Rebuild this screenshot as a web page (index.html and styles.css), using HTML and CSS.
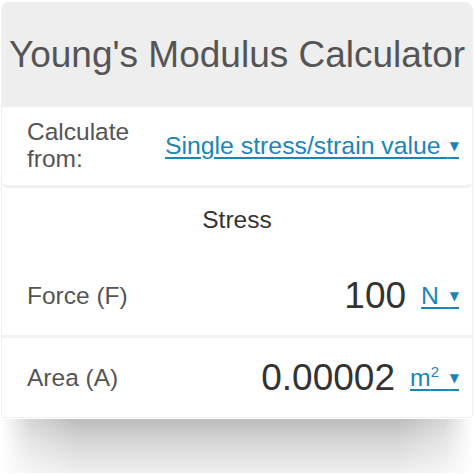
FILE: index.html
```html
<!DOCTYPE html>
<html>
<head>
<meta charset="utf-8">
<link rel="stylesheet" href="styles.css">
</head>
<body>
<div class="card">
  <div class="header">Young's Modulus Calculator</div>
  <div class="row calc">
    <div class="label two-line">Calculate<br>from:</div>
    <a class="select">Single stress/strain value <span class="gap"> </span><span class="arrow">&#9660;</span></a>
  </div>
  <div class="section">
    <div class="section-title">Stress</div>
    <div class="row field sep">
      <div class="label">Force (F)</div>
      <div class="value-group">
        <span class="value">100</span>
        <a class="select">N <span class="gap wide"> </span><span class="arrow">&#9660;</span></a>
      </div>
    </div>
    <div class="row field">
      <div class="label">Area (A)</div>
      <div class="value-group">
        <span class="value">0.00002</span>
        <a class="select">m<sup>2</sup> <span class="gap wide"> </span><span class="arrow">&#9660;</span></a>
      </div>
    </div>
  </div>
</div>
<div class="shadow"></div>
</body>
</html>
```
FILE: styles.css
```css
html, body {
  margin: 0;
  padding: 0;
  background: #ffffff;
}
body {
  font-family: "Liberation Sans", Arial, sans-serif;
  width: 474px;
  height: 474px;
  overflow: hidden;
}
.card {
  margin: 2px 1px 0 1px;
  border: 1px solid #efefef;
  border-top: none;
  border-radius: 8px 8px 4px 4px;
  background: #ffffff;
  overflow: hidden;
}
.header {
  background: #eeeeee;
  height: 105px;
  display: flex;
  align-items: center;
  justify-content: center;
  color: #555555;
  font-size: 37px;
}
.row {
  display: flex;
  align-items: center;
  justify-content: space-between;
  padding: 0 13px 0 25px;
  background: #ffffff;
}
.calc {
  height: 78px;
  border-bottom: 3px solid #f1f1f1;
  border-radius: 0 0 6px 6px;
}
.label {
  color: #555555;
  font-size: 24.5px;
}
.two-line {
  line-height: 27px;
  margin-top: -2px;
}
.select {
  color: #1a86b8;
  text-decoration: underline;
  text-underline-offset: 3px;
  text-decoration-thickness: 1.5px;
  font-size: 24.8px;
  white-space: pre;
}
.gap {
  font-size: 8px;
}
.gap.wide {
  font-size: 14px;
}
.arrow {
  font-family: "DejaVu Sans", sans-serif;
  font-size: 12px;
  vertical-align: 4px;
}
.section-title {
  text-align: center;
  color: #333333;
  font-size: 24.5px;
  padding-top: 18px;
  height: 50px;
  box-sizing: content-box;
}
.field {
  height: 79px;
}
.sep {
  border-bottom: 3px solid #f1f1f1;
}
.value-group {
  display: flex;
  align-items: center;
  gap: 15px;
}
.value {
  color: #333333;
  font-size: 37px;
}
sup {
  font-size: 15px;
  line-height: 0;
  vertical-align: 9px;
}
.shadow {
  margin: 1px 1px 0 1px;
  height: 54px;
  background: linear-gradient(to bottom, #bcbcbc 0%, #d8d8d8 45%, #efefef 100%);
  -webkit-mask-image: linear-gradient(to right, transparent 0%, rgba(0,0,0,0.6) 6%, #000 16%, #000 84%, rgba(0,0,0,0.6) 94%, transparent 100%);
  mask-image: linear-gradient(to right, transparent 0%, rgba(0,0,0,0.6) 6%, #000 16%, #000 84%, rgba(0,0,0,0.6) 94%, transparent 100%);
}
```
